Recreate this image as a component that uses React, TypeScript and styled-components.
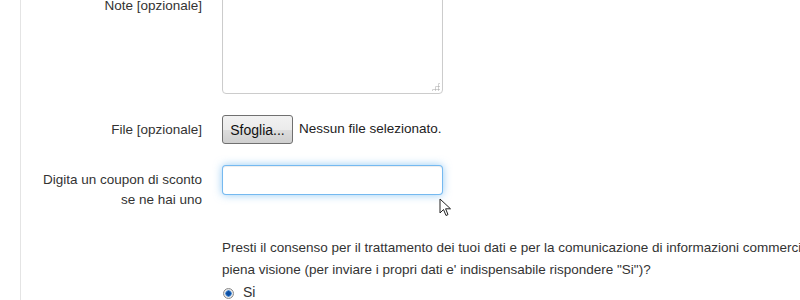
import React from 'react'
import styled, { createGlobalStyle } from 'styled-components'

const GlobalStyle = createGlobalStyle`
  html, body {
    margin: 0;
    padding: 0;
    background: #fff;
    overflow: hidden;
  }
  body {
    font-family: "Liberation Sans", Arial, sans-serif;
    font-size: 13.5px;
    line-height: 20px;
    color: #333;
  }
`

const Page = styled.div`
  position: relative;
  margin-left: 20px;
  height: 300px;
  border-left: 1px solid #e4e4e4;
  overflow: hidden;
`

const Form = styled.form`
  margin-top: -10px;
`

const ControlGroup = styled.div<{ gapAfter?: number }>`
  display: grid;
  grid-template-columns: 181px 1fr;
  column-gap: 20px;
  margin-bottom: ${p => p.gapAfter ?? 20}px;
`

const Label = styled.label`
  text-align: right;
  padding-top: 6px;
  line-height: 20px;
`

const Controls = styled.div<{ top?: boolean }>`
  display: flex;
  align-items: ${p => (p.top ? 'flex-start' : 'center')};
  min-height: 30px;
`

const AreaWrap = styled.div`
  position: relative;
  width: 221px;
  height: 104px;
`

const TextArea = styled.textarea`
  box-sizing: border-box;
  width: 100%;
  height: 100%;
  border: 1px solid #ccc;
  border-radius: 4px;
  box-shadow: inset 0 1px 1px rgba(0, 0, 0, 0.075);
  resize: none;
  font: inherit;
  padding: 4px 6px;
  outline: none;
`

const Grip = styled.span`
  position: absolute;
  right: 3px;
  bottom: 3px;
  width: 9px;
  height: 9px;
  background:
    radial-gradient(circle, #bbb 0.9px, transparent 1.2px) 0 0 / 3px 3px;
  clip-path: polygon(100% 0, 100% 100%, 0 100%);
`

const FileButton = styled.button`
  height: 29px;
  width: 71px;
  margin-top: 1px;
  padding: 0 6px;
  border: 1px solid #707070;
  border-radius: 3px;
  background: linear-gradient(#f2f2f2 0%, #ebebeb 50%, #dddddd 51%, #cfcfcf 100%);
  font-family: "Liberation Sans", Arial, sans-serif;
  font-size: 14px;
  color: #111;
`

const FileName = styled.span`
  margin-left: 6px;
  font-size: 13.5px;
  color: #222;
`

const Input = styled.input`
  box-sizing: border-box;
  width: 221px;
  height: 30px;
  margin-top: 1px;
  padding: 4px 6px;
  border: 1px solid rgba(82, 168, 236, 0.8);
  border-radius: 4px;
  box-shadow: inset 0 1px 1px rgba(0, 0, 0, 0.075), 0 0 8px rgba(82, 168, 236, 0.6);
  font: inherit;
  outline: none;
`

const Consent = styled.div`
  grid-column: 2;
  padding-top: 27px;
  line-height: 22px;
`

const Question = styled.p`
  margin: 0;
  white-space: nowrap;
`

const RadioRow = styled.label`
  display: flex;
  align-items: center;
  height: 22px;
  padding-left: 1px;
`

const Radio = styled.span<{ checked: boolean }>`
  box-sizing: border-box;
  width: 11px;
  height: 11px;
  margin-top: 2px;
  border-radius: 50%;
  border: 1px solid #8a8a8a;
  background: ${p =>
    p.checked
      ? 'radial-gradient(circle, #0b4ea2 0 2px, #4f8fd6 2.6px 3px, #e6e6e6 3.4px)'
      : 'linear-gradient(#eaeaea, #fff)'};
`

const RadioText = styled.span`
  margin-left: 9px;
  font-size: 14px;
`

const Pointer = styled.svg`
  position: absolute;
  left: 418px;
  top: 198px;
`

export default function App() {
  return (
    <>
      <GlobalStyle />
      <Page>
        <Form>
          <ControlGroup>
            <Label>Note [opzionale]</Label>
            <Controls>
              <AreaWrap>
                <TextArea />
                <Grip />
              </AreaWrap>
            </Controls>
          </ControlGroup>
          <ControlGroup>
            <Label>File [opzionale]</Label>
            <Controls>
              <FileButton type="button">Sfoglia...</FileButton>
              <FileName>Nessun file selezionato.</FileName>
            </Controls>
          </ControlGroup>
          <ControlGroup gapAfter={0}>
            <Label>
              Digita un coupon di sconto
              <br />
              se ne hai uno
            </Label>
            <Controls top>
              <Input type="text" />
            </Controls>
            <Consent>
              <Question>
                Presti il consenso per il trattamento dei tuoi dati e per la comunicazione di informazioni commerciali, come da informativa di cui hai preso
                <br />
                piena visione (per inviare i propri dati e' indispensabile rispondere "Si")?
              </Question>
              <RadioRow>
                <Radio checked />
                <RadioText>Si</RadioText>
              </RadioRow>
            </Consent>
          </ControlGroup>
        </Form>
        <Pointer width="13" height="19" viewBox="0 0 13 19">
          <path d="M1 1 L1 15 L4.5 11.5 L7 17.5 L9 16.6 L6.6 10.8 L11.5 10.8 Z" fill="#fff" stroke="#222" strokeWidth="1" strokeLinejoin="round" />
        </Pointer>
      </Page>
    </>
  )
}
